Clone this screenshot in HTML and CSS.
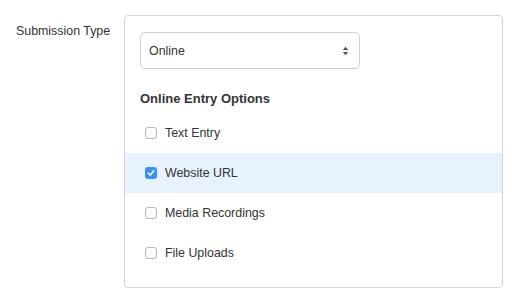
FILE: index.html
```html
<!DOCTYPE html>
<html>
<head>
<meta charset="utf-8">
<link rel="stylesheet" href="styles.css">
</head>
<body>
<div class="form-row">
  <div class="label">Submission Type</div>
  <div class="box">
    <div class="select">
      <span>Online</span>
      <svg class="arrows" width="7" height="10" viewBox="0 0 7 10"><path d="M3.5 0.8 L6.2 4 L0.8 4 Z M3.5 9.2 L6.2 6 L0.8 6 Z" fill="#555"/></svg>
    </div>
    <div class="heading">Online Entry Options</div>
    <div class="options">
      <div class="opt"><span class="cb"></span><span>Text Entry</span></div>
      <div class="opt active"><span class="cb checked"><svg width="12" height="12" viewBox="0 0 12 12"><path d="M3.3 6.2 L5.2 8.1 L8.8 3.8" fill="none" stroke="#fff" stroke-width="1.6" stroke-linecap="round" stroke-linejoin="round"/></svg></span><span>Website URL</span></div>
      <div class="opt"><span class="cb"></span><span>Media Recordings</span></div>
      <div class="opt"><span class="cb"></span><span>File Uploads</span></div>
    </div>
  </div>
</div>
</body>
</html>
```
FILE: styles.css
```css
* { box-sizing: border-box; }
body {
  margin: 0;
  background: #fff;
  font-family: "Liberation Sans", Arial, sans-serif;
  font-size: 12.4px;
  color: #333;
}
.form-row {
  display: flex;
  padding: 15px 0 0 16px;
}
.label {
  width: 108px;
  padding-top: 9px;
  line-height: 14px;
}
.box {
  width: 379px;
  height: 273px;
  border: 1px solid #d3d3d3;
  border-radius: 4px;
  padding-top: 16px;
}
.select {
  margin-left: 15px;
  width: 220px;
  height: 37px;
  border: 1px solid #cfcfcf;
  border-radius: 5px;
  display: flex;
  align-items: center;
  justify-content: space-between;
  padding: 0 10px 0 8px;
}
.arrows { display: block; }
.heading {
  margin: 22px 0 0 15px;
  font-size: 13px;
  font-weight: bold;
  line-height: 16px;
}
.options {
  margin-top: 6px;
}
.opt {
  height: 40px;
  display: flex;
  align-items: center;
  padding-left: 20px;
  gap: 8px;
}
.opt.active { background: #e6f2fe; }
.cb {
  width: 12px;
  height: 12px;
  border: 1px solid #b5b5b5;
  border-radius: 3px;
  background: #fff;
  display: block;
}
.cb.checked {
  border: none;
  background: #3b8ff6;
}
.cb svg { display: block; }
```
